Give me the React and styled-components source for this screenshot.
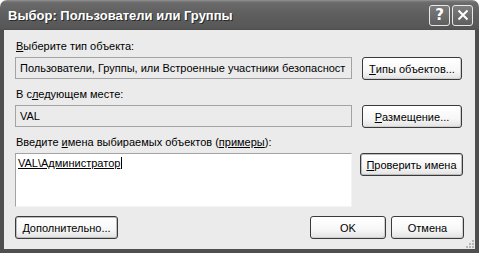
import React from 'react';
import styled, { createGlobalStyle } from 'styled-components';

const GlobalStyle = createGlobalStyle`
    html, body {
        margin: 0;
        padding: 0;
        background: #fff;
    }
`;

const Window = styled.div`
    width: 479px;
    height: 253px;
    display: flex;
    flex-direction: column;
    font-family: "Liberation Sans", Arial, sans-serif;
    font-size: 11px;
    color: #000;
    box-sizing: border-box;
`;

const TitleBar = styled.div`
    height: 30px;
    flex: none;
    display: flex;
    align-items: center;
    justify-content: space-between;
    padding: 0 6px 0 8px;
    border-radius: 7px 7px 0 0;
    background: linear-gradient(#9a9a9a 0, #7a7a7a 1px, #6a6a6a 3px, #5e5e5e 15px, #575757 28px, #4f4f4f 30px);
    box-sizing: border-box;
`;

const Title = styled.span`
    font-family: "Liberation Sans", Arial, sans-serif;
    font-weight: bold;
    font-size: 13px;
    color: #fff;
    text-shadow: 1px 1px 0 #2a2a2a;
`;

const Caption = styled.div`
    display: flex;
    gap: 2px;
`;

const CaptionButton = styled.div`
    width: 19px;
    height: 19px;
    border: 1px solid #e8e8e8;
    border-radius: 3px;
    background: linear-gradient(#7c7c7c, #5f5f5f);
    color: #fff;
    display: flex;
    align-items: center;
    justify-content: center;
    font-family: "DejaVu Sans", sans-serif;
    font-weight: bold;
    font-size: 15px;
`;

const Frame = styled.div`
    flex: 1;
    display: flex;
    flex-direction: column;
    background: #ebebeb;
    border: 4px solid #4f4f4f;
    border-top: none;
    padding: 10px 11px 0 11px;
    box-sizing: border-box;
    position: relative;
`;

const Label = styled.div`
    height: 13px;
    line-height: 13px;
    margin: ${p => p.$top || 0}px 0 4px 1px;
`;

const Row = styled.div`
    display: grid;
    grid-template-columns: 337px 1fr;
    column-gap: ${p => p.$gap || 10}px;
    align-items: start;
`;

const Field = styled.div`
    height: 22px;
    border: 1px solid #a3a3a3;
    background: #ebebeb;
    box-sizing: border-box;
    padding: 0 4px;
    line-height: 20px;
    white-space: nowrap;
    overflow: hidden;
`;

const TextArea = styled.div`
    height: 54px;
    border: 1px solid #a3a3a3;
    border-right-color: #f4f4f4;
    border-bottom-color: #f4f4f4;
    box-shadow: inset 1px 1px 0 #fff;
    background: #fff;
    box-sizing: border-box;
    padding: 2px 2px;
    line-height: 14px;
`;

const Resolved = styled.span`
    text-decoration: underline;
    border-right: 1px solid #000;
    padding-right: 1px;
`;

const Button = styled.div`
    height: 23px;
    width: ${p => p.$w ? `${p.$w}px` : 'auto'};
    border: 1px solid #3a3a3a;
    border-radius: 3px;
    background: linear-gradient(#ffffff 0, #f7f7f7 60%, #e2e2e2 100%);
    box-shadow: ${p => p.$focus ? 'inset 0 0 0 1px #bdbdbd' : 'inset -1px -1px 0 #cfcfcf'};
    box-sizing: border-box;
    display: flex;
    align-items: center;
    justify-content: center;
    white-space: nowrap;
`;

const Bottom = styled.div`
    display: flex;
    justify-content: space-between;
    margin-top: 9px;
`;

const ButtonGroup = styled.div`
    display: flex;
    gap: 5px;
`;

const Key = styled.u``;

const Link = styled.span`
    text-decoration: underline;
`;

const Grip = styled.svg`
    position: absolute;
    right: 1px;
    bottom: 1px;
`;

export default function App() {
    return (
        <>
            <GlobalStyle />
            <Window>
                <TitleBar>
                    <Title>Выбор: Пользователи или Группы</Title>
                    <Caption>
                        <CaptionButton>?</CaptionButton>
                        <CaptionButton>
                            <svg width="12" height="12" viewBox="0 0 12 12">
                                <path d="M1.5 1.5 L10.5 10.5 M10.5 1.5 L1.5 10.5" stroke="#fff" strokeWidth="2" />
                            </svg>
                        </CaptionButton>
                    </Caption>
                </TitleBar>
                <Frame>
                    <Label><Key>В</Key>ыберите тип объекта:</Label>
                    <Row>
                        <Field>Пользователи, Группы, или Встроенные участники безопасност</Field>
                        <Button $w={100}><Key>Т</Key>ипы объектов...</Button>
                    </Row>
                    <Label $top={8}>В с<Key>л</Key>едующем месте:</Label>
                    <Row>
                        <Field>VAL</Field>
                        <Button $w={100}><Key>Р</Key>азмещение...</Button>
                    </Row>
                    <Label $top={8}>Введите <Key>и</Key>мена выбираемых объектов (<Link>примеры</Link>):</Label>
                    <Row $gap={8}>
                        <TextArea><Resolved>VAL\Администратор</Resolved></TextArea>
                        <Button $w={103} $focus><Key>П</Key>роверить имена</Button>
                    </Row>
                    <Bottom>
                        <Button $w={103} $focus><Key>Д</Key>ополнительно...</Button>
                        <ButtonGroup>
                            <Button $w={76}>OK</Button>
                            <Button $w={73}>Отмена</Button>
                        </ButtonGroup>
                    </Bottom>
                    <Grip width="8" height="8" viewBox="0 0 8 8">
                        <g fill="#b5b5b5">
                            <rect x="6" y="0" width="2" height="2" />
                            <rect x="3" y="3" width="2" height="2" />
                            <rect x="6" y="3" width="2" height="2" />
                            <rect x="0" y="6" width="2" height="2" />
                            <rect x="3" y="6" width="2" height="2" />
                            <rect x="6" y="6" width="2" height="2" />
                        </g>
                    </Grip>
                </Frame>
            </Window>
        </>
    );
}
